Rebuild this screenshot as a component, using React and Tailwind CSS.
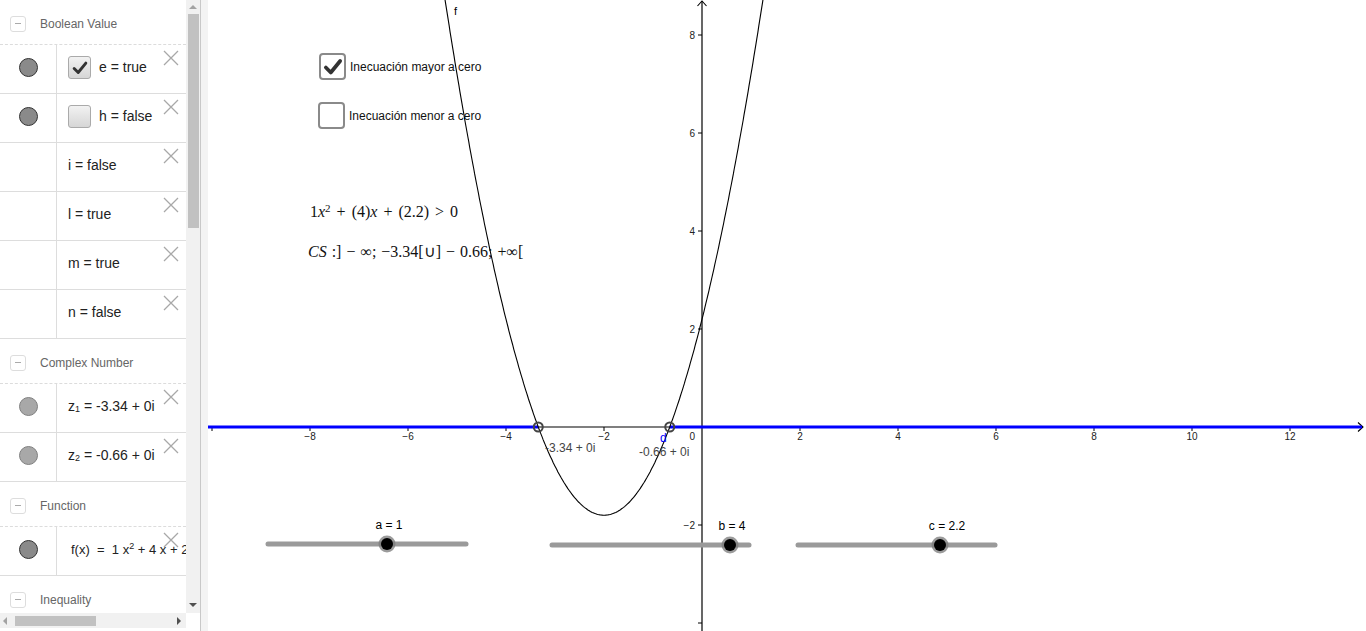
import React from 'react';

const XIcon = () => (
  <svg width="16" height="16" viewBox="0 0 16 16" className="absolute right-[7px] top-[5px]">
    <path d="M1 1L15 15M15 1L1 15" stroke="#a8a8a8" strokeWidth="1.3" fill="none" />
  </svg>
);

const Check = ({ size = 18, w = 3 }) => (
  <svg width={size} height={size} viewBox="0 0 20 20">
    <path d="M3.5 10.5L8 15L16.5 4.5" stroke="#333" strokeWidth={w} fill="none" strokeLinecap="round" strokeLinejoin="round" />
  </svg>
);

function Header({ label }) {
  return (
    <div className="flex h-[45px] shrink-0 items-center border-b border-dashed border-[#dcdcdc] pt-[3px]">
      <div className="ml-[10px] flex h-4 w-4 items-center justify-center rounded-[3px] border border-[#ddd]">
        <div className="h-px w-[6px] bg-[#aaa]" />
      </div>
      <span className="ml-[14px] text-[12px] text-[#666]">{label}</span>
    </div>
  );
}

function Row({ dot, children }) {
  const dots = {
    dark: 'border-[#333] bg-[#8a8a8a]',
    light: 'border-[#808080] bg-[#a8a8a8]',
  };
  return (
    <div className="flex h-[49px] shrink-0 border-b border-[#ddd]">
      <div className="flex w-[57px] shrink-0 items-center justify-center border-r border-[#ddd] pb-[3px]">
        {dot && <span className={`h-[19px] w-[19px] rounded-full border ${dots[dot]}`} />}
      </div>
      <div className="relative flex flex-1 items-center overflow-hidden whitespace-nowrap pb-[3px] pl-[11px] text-[14px] text-[#222]">
        {children}
        <XIcon />
      </div>
    </div>
  );
}

function AlgBox({ checked }) {
  return (
    <span className="mr-[8px] flex h-[23px] w-[23px] items-center justify-center rounded-[3px] border border-[#aaa] bg-linear-to-b from-[#f2f2f2] to-[#d6d6d6]">
      {checked && <Check size={18} w={3.2} />}
    </span>
  );
}

function Algebra() {
  return (
    <div className="flex h-[631px] w-[200px] shrink-0 flex-col">
      <div className="flex h-[613px]">
        <div className="flex w-[186px] flex-col overflow-hidden">
          <Header label="Boolean Value" />
          <Row dot="dark"><AlgBox checked />e = true</Row>
          <Row dot="dark"><AlgBox />h = false</Row>
          <Row>i = false</Row>
          <Row>l = true</Row>
          <Row>m = true</Row>
          <Row>n = false</Row>
          <Header label="Complex Number" />
          <Row dot="light">z<sub className="text-[9px]">1</sub>&nbsp;= -3.34 + 0i</Row>
          <Row dot="light">z<sub className="text-[9px]">2</sub>&nbsp;= -0.66 + 0i</Row>
          <Header label="Function" />
          <Row dot="dark">
            <span className="pl-[3px] text-[13px]">f(x) &nbsp;= &nbsp;1 x<sup className="text-[9px]">2</sup> + 4 x + 2.2</span>
          </Row>
          <Header label="Inequality" />
        </div>
        <div className="flex w-[14px] flex-col items-center bg-[#f1f1f1]">
          <div className="mt-[5px] h-0 w-0 border-x-[4px] border-b-[4px] border-x-transparent border-b-[#a3a3a3]" />
          <div className="mt-[5px] h-[214px] w-[11px] bg-[#c1c1c1]" />
          <div className="flex-1" />
          <div className="mb-[6px] h-0 w-0 border-x-[4px] border-t-[4px] border-x-transparent border-t-[#505050]" />
        </div>
      </div>
      <div className="flex h-[15px] w-[186px] items-center bg-[#f1f1f1]">
        <div className="ml-[3px] h-0 w-0 border-y-[4px] border-r-[4px] border-y-transparent border-r-[#a3a3a3]" />
        <div className="ml-[8px] h-[10px] w-[81px] bg-[#c1c1c1]" />
        <div className="flex-1" />
        <div className="mr-[5px] h-0 w-0 border-y-[4px] border-l-[4px] border-y-transparent border-l-[#505050]" />
      </div>
    </div>
  );
}

function Graph() {
  const ox = 494;
  const oy = 427;
  const s = 49;
  const px = (x) => ox + s * x;
  const py = (y) => oy - s * y;
  let d = '';
  for (let i = 0; i <= 340; i++) {
    const x = -5.4 + i * 0.02;
    const y = x * x + 4 * x + 2.2;
    d += `${i ? 'L' : 'M'}${px(x).toFixed(1)} ${py(y).toFixed(1)}`;
  }
  const r1 = px(-3.3416);
  const r2 = px(-0.6584);
  const xt = [-10, -8, -6, -4, -2, 2, 4, 6, 8, 10, 12];
  const yt = [8, 6, 4, 2, -2, -4];
  const lab = (n) => (n < 0 ? `\u2212${-n}` : `${n}`);
  const font = 'Liberation Sans, Arial, sans-serif';
  const sliders = [
    { x1: 60, x2: 258, y: 544, k: 179, t: 'a = 1', tx: 181 },
    { x1: 344, x2: 541, y: 545, k: 522, t: 'b = 4', tx: 524 },
    { x1: 590, x2: 787, y: 545, k: 732, t: 'c = 2.2', tx: 739 },
  ];
  return (
    <svg width="1158" height="631" className="block" fontFamily={font}>
      <line x1="0" y1={oy} x2="1155" y2={oy} stroke="#000" strokeWidth="1.2" />
      <path d="M1150 422.5L1155 427L1150 431.5" stroke="#000" fill="none" strokeWidth="1.1" />
      <line x1={ox} y1="1" x2={ox} y2="631" stroke="#000" strokeWidth="1.2" />
      <path d="M489.5 6L494 1L498.5 6" stroke="#000" fill="none" strokeWidth="1.1" />
      {xt.map((n) => (
        <g key={n}>
          <line x1={px(n)} y1={oy} x2={px(n)} y2={oy + 4} stroke="#000" />
          {n !== -10 && (
            <text x={px(n)} y="440" fontSize="10" textAnchor="middle" fill="#222">{lab(n)}</text>
          )}
        </g>
      ))}
      <text x="487" y="440" fontSize="10" textAnchor="end" fill="#222">0</text>
      {yt.map((n) => (
        <g key={n}>
          <line x1={ox - 4} y1={py(n)} x2={ox} y2={py(n)} stroke="#000" />
          {n !== -4 && (
            <text x="487" y={py(n) + 4} fontSize="10" textAnchor="end" fill="#222">{lab(n)}</text>
          )}
        </g>
      ))}
      <line x1="0" y1={oy} x2={r1} y2={oy} stroke="#0000ff" strokeWidth="3" />
      <line x1={r2} y1={oy} x2="1154" y2={oy} stroke="#0000ff" strokeWidth="3" />
      <path d={d} stroke="#000" strokeWidth="1.1" fill="none" />
      <text x="246" y="15" fontSize="11" fill="#000">f</text>
      <circle cx={r1} cy={oy} r="4.5" stroke="#444" strokeWidth="2" fill="none" />
      <circle cx={r2} cy={oy} r="4.5" stroke="#444" strokeWidth="2" fill="none" />
      <text x="452" y="442" fontSize="12" fill="#0000ff">d</text>
      <text x="337" y="452" fontSize="12" fill="#444">-3.34 + 0i</text>
      <text x="431" y="456" fontSize="12" fill="#444">-0.66 + 0i</text>
      {sliders.map((sl) => (
        <g key={sl.t}>
          <line x1={sl.x1} y1={sl.y} x2={sl.x2} y2={sl.y} stroke="#9a9a9a" strokeWidth="5" strokeLinecap="round" />
          <circle cx={sl.k} cy={sl.y} r="8.5" fill="#7a7a7a" fillOpacity="0.75" />
          <circle cx={sl.k} cy={sl.y} r="6" fill="#000" />
          <text x={sl.tx} y={sl.y - 15} fontSize="12" textAnchor="middle" fill="#000">{sl.t}</text>
        </g>
      ))}
    </svg>
  );
}

function GgbCheck({ checked, label, className }) {
  return (
    <div className={`absolute flex items-center gap-[4px] ${className}`}>
      <span className="flex h-[27px] w-[27px] items-center justify-center rounded-[4px] border-2 border-[#8a8a8a] bg-white">
        {checked && <Check size={22} w={3.4} />}
      </span>
      <span className="text-[12px] text-[#111]">{label}</span>
    </div>
  );
}

export default function App() {
  return (
    <div className="flex h-[631px] w-[1366px] overflow-hidden bg-white font-['Liberation_Sans',Arial,sans-serif]">
      <Algebra />
      <div className="w-[8px] shrink-0 border-l border-[#c8c8c8] bg-[#f3f3f3]" />
      <div className="relative flex-1 overflow-hidden">
        <Graph />
        <GgbCheck checked label="Inecuación mayor a cero" className="left-[111px] top-[53px]" />
        <GgbCheck label="Inecuación menor a cero" className="left-[110px] top-[102px]" />
        <div className="absolute left-[102px] top-[204px] whitespace-nowrap font-['Liberation_Serif','Times_New_Roman',serif] text-[16px] leading-none text-[#111] [word-spacing:2px]">
          1<i>x</i><sup className="text-[11px]">2</sup> + (4)<i>x</i> + (2.2) &gt; 0
        </div>
        <div className="absolute left-[100px] top-[244px] whitespace-nowrap font-['Liberation_Serif','Times_New_Roman',serif] text-[16px] leading-none text-[#111] [word-spacing:1px]">
          <i>CS</i> :] − ∞; −3.34[∪] − 0.66; +∞[
        </div>
      </div>
    </div>
  );
}
